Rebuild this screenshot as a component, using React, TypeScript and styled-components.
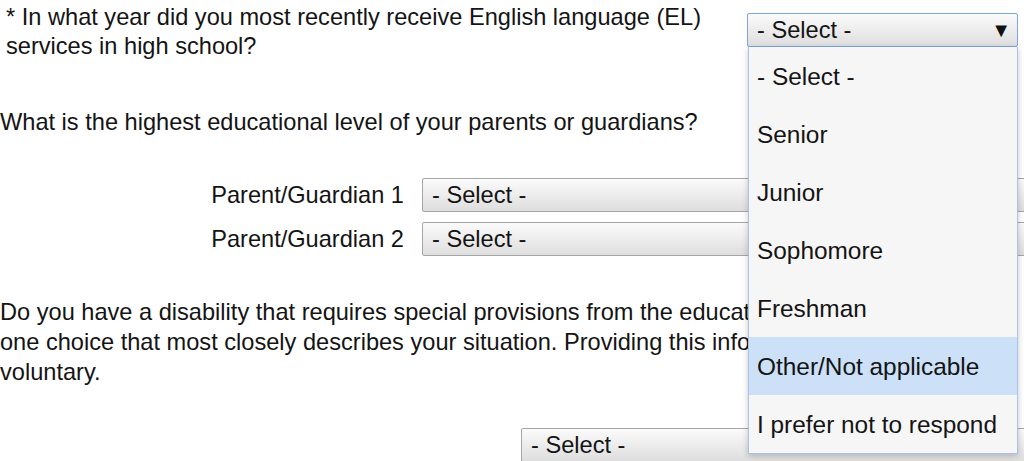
import styled, { createGlobalStyle } from 'styled-components';

const GlobalStyle = createGlobalStyle`
  html, body {
    margin: 0;
    padding: 0;
    background: #ffffff;
    overflow: hidden;
  }
  body {
    font-family: 'Liberation Sans', Arial, sans-serif;
    color: #141414;
  }
`;

const Page = styled.div`
  width: 1120px;
  height: 461px;
  font-size: 23.6px;
  line-height: 29px;
  display: flex;
  flex-direction: column;
`;

const QuestionRow = styled.div`
  display: grid;
  grid-template-columns: 747px 271px;
  align-items: start;
`;

const QuestionText = styled.div`
  padding: 3px 0 0 6px;
  width: 720px;
`;

const SelectWrap = styled.div`
  position: relative;
  margin-top: 13px;
`;

const SelectBox = styled.div<{ $focused?: boolean; $width: number }>`
  box-sizing: border-box;
  width: ${(p) => p.$width}px;
  height: 34px;
  display: flex;
  align-items: center;
  justify-content: space-between;
  padding: 0 6px 0 9px;
  border: 1px solid ${(p) => (p.$focused ? '#7ba6e3' : '#a6a6a6')};
  border-radius: 2px;
  background: linear-gradient(#fbfbfb, #dedede);
  white-space: nowrap;
`;

const Arrow = styled.span`
  font-size: 20px;
  line-height: 1;
  color: #111;
`;

const Dropdown = styled.ul`
  position: absolute;
  top: 34px;
  left: 1px;
  width: 270px;
  margin: 0;
  padding: 0;
  list-style: none;
  box-sizing: border-box;
  background: #f6f6f6;
  border: 1px solid #a9c3e8;
  border-top: none;
  box-shadow: 0 2px 6px rgba(0, 0, 0, 0.22);
  z-index: 5;
  font-size: 24.4px;
`;

const Option = styled.li<{ $active?: boolean }>`
  height: 58px;
  display: flex;
  align-items: center;
  padding-left: 8px;
  background: ${(p) => (p.$active ? '#cce1f7' : 'transparent')};
  white-space: nowrap;
`;

const Prompt = styled.div`
  margin-top: 47px;
`;

const GuardianGrid = styled.div`
  display: grid;
  grid-template-columns: 404px auto;
  column-gap: 18px;
  row-gap: 10px;
  align-items: center;
  margin-top: 41px;
`;

const GuardianLabel = styled.div`
  text-align: right;
`;

const Paragraph = styled.p`
  margin: 41px 0 0 0;
  line-height: 30px;
  white-space: nowrap;
`;

const BottomSelect = styled.div`
  margin: 41px 0 0 521px;
`;

const options = [
  '- Select -',
  'Senior',
  'Junior',
  'Sophomore',
  'Freshman',
  'Other/Not applicable',
  'I prefer not to respond',
];

export default function App() {
  return (
    <>
      <GlobalStyle />
      <Page>
        <QuestionRow>
          <QuestionText>
            * In what year did you most recently receive English language (EL) services in high school?
          </QuestionText>
          <SelectWrap>
            <SelectBox $focused $width={271}>
              <span>- Select -</span>
              <Arrow>▼</Arrow>
            </SelectBox>
            <Dropdown>
              {options.map((o) => (
                <Option key={o} $active={o === 'Other/Not applicable'}>
                  {o}
                </Option>
              ))}
            </Dropdown>
          </SelectWrap>
        </QuestionRow>

        <Prompt>What is the highest educational level of your parents or guardians?</Prompt>

        <GuardianGrid>
          <GuardianLabel>Parent/Guardian 1</GuardianLabel>
          <SelectBox $width={680}>
            <span>- Select -</span>
            <Arrow>▼</Arrow>
          </SelectBox>
          <GuardianLabel>Parent/Guardian 2</GuardianLabel>
          <SelectBox $width={680}>
            <span>- Select -</span>
            <Arrow>▼</Arrow>
          </SelectBox>
        </GuardianGrid>

        <Paragraph>
          Do you have a disability that requires special provisions from the educational institution?
          <br />
          one choice that most closely describes your situation. Providing this information is
          <br />
          voluntary.
        </Paragraph>

        <BottomSelect>
          <SelectBox $width={560}>
            <span>- Select -</span>
            <Arrow>▼</Arrow>
          </SelectBox>
        </BottomSelect>
      </Page>
    </>
  );
}
